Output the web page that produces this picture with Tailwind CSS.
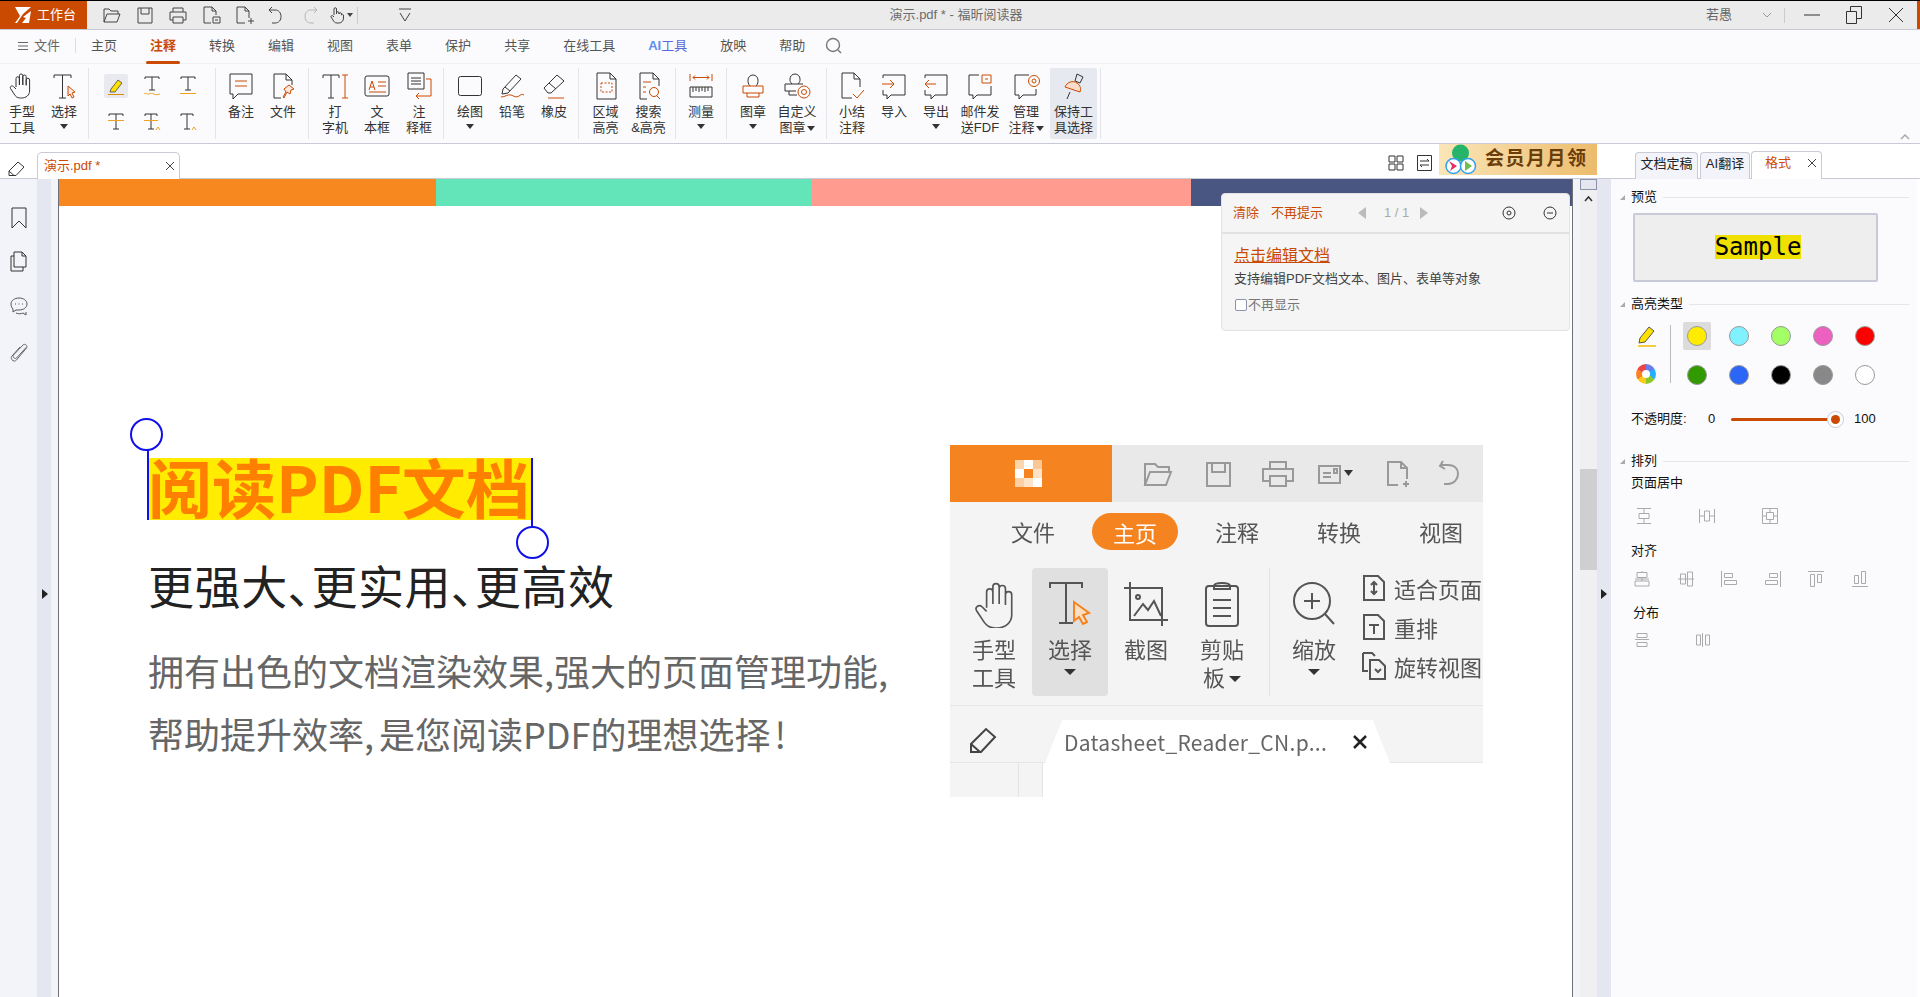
<!DOCTYPE html>
<html lang="zh">
<head>
<meta charset="utf-8">
<title>演示.pdf - 福昕阅读器</title>
<script src="https://cdn.jsdelivr.net/npm/@tailwindcss/browser@4"></script>
</head>
<body class="w-[1920px] h-[997px] overflow-hidden bg-white text-[13px] text-[#333] [font-family:'Liberation_Sans','Noto_Sans_CJK_SC',sans-serif]">

<!-- title bar -->
<header class="h-[30px] border-t border-b border-t-black border-b-[#c8cad8] bg-[#ebebeb] flex items-center relative">
  <div class="w-[87px] h-full bg-[#ca4a02] flex items-center pl-[14px] gap-[5px] text-white text-[13px]">
    <svg width="18" height="18" viewBox="0 0 18 18"><path d="M1 1h16L9 8 3 17l-2 0 5-7z M9 11l8-6-2 12H8l4-5z" fill="#fff"/></svg>
    <span>工作台</span>
  </div>
  <div class="flex items-center pl-[8px]">
    <svg class="w-[33px]" height="20" viewBox="0 0 33 20" fill="none" stroke="#444"><path d="M9 17V4h5l2 2h7v3 M9 17l3-8h13l-3 8z"/></svg>
    <svg class="w-[33px]" height="20" viewBox="0 0 33 20" fill="none" stroke="#444"><path d="M10 3h14v15H10z M13 3v6h8V3"/></svg>
    <svg class="w-[33px]" height="20" viewBox="0 0 33 20" fill="none" stroke="#444"><path d="M12 7V3h10v4 M12 15H9V7h16v8h-3 M12 12h10v6H12z"/></svg>
    <svg class="w-[33px]" height="20" viewBox="0 0 33 20" fill="none" stroke="#444"><path d="M17 18h-7V2h8l4 4v4 M18 2v4h4 M19 12h7v6h-7z M21 15h3"/></svg>
    <svg class="w-[33px]" height="20" viewBox="0 0 33 20" fill="none" stroke="#444"><path d="M18 18h-8V2h8l4 4v7 M18 2v4h4 M24 13v6 M21 16h6"/></svg>
    <svg class="w-[33px]" height="20" viewBox="0 0 33 20" fill="none" stroke="#444"><path d="M12 2L9 5l3 3 M9 5h6c4 0 6 3 6 6.500S19 18 15 18h-3"/></svg>
    <svg class="w-[33px]" height="20" viewBox="0 0 33 20" fill="none" stroke="#b5b5b5"><path d="M21 2l3 3-3 3 M24 5h-6c-4 0-6 3-6 6.500S14 18 18 18h3"/></svg>
    <svg class="w-[33px]" height="20" viewBox="0 0 33 20" fill="none" stroke="#444"><path d="M8 10V4a1.200 1.200 0 0 1 2.500 0v5 M10.500 8a1.200 1.200 0 0 1 2.500 0v1 M13 9a1.200 1.200 0 0 1 2.500 0v1 M15.500 10a1.200 1.200 0 0 1 2 0v3c0 3-2 5-4.500 5H11c-2 0-3-1-4-3l-2-3c-.5-1 1-2 2-1l1 1"/><path d="M21 8h6l-3 4z" fill="#444" stroke="none"/></svg>
    <div class="w-px h-[17px] bg-[#ccc] ml-[-2px]"></div>
    <svg class="ml-[37px]" width="20" height="20" viewBox="0 0 20 20" fill="none" stroke="#444"><path d="M4 4h12 M5 8l5 8 5-8"/></svg>
  </div>
  <div class="absolute left-0 w-[1912px] text-center text-[#6b6b6b] pointer-events-none">演示.pdf * - 福昕阅读器</div>
  <div class="ml-auto flex items-center text-[#666] h-full">
    <span>若愚</span>
    <svg class="ml-[29px]" width="12" height="12" viewBox="0 0 12 12" fill="none" stroke="#999"><path d="M2 4l4 4 4-4"/></svg>
    <div class="w-px h-[15px] bg-[#ccc] ml-[11px]"></div>
    <svg class="ml-[19px]" width="16" height="16" viewBox="0 0 16 16" fill="none" stroke="#333"><path d="M0 8h16"/></svg>
    <svg class="ml-[26px]" width="16" height="18" viewBox="0 0 16 18" fill="none" stroke="#333"><path d="M.5 5.500h10v12H.5z M4.500 5.500V.5h11v12h-5"/></svg>
    <svg class="ml-[26px]" width="16" height="16" viewBox="0 0 16 16" fill="none" stroke="#333"><path d="M1 1l14 14 M15 1L1 15"/></svg>
    <div class="w-[3px] h-full bg-[#ca4a02] ml-[13px]"></div>
  </div>
</header>

<!-- menu row -->
<nav class="h-[34px] pb-[2px] bg-[#fbfbfd] border-b border-[#f0f0f4] flex items-center text-[#555] relative">
  <svg class="ml-[17px]" width="12" height="12" viewBox="0 0 12 12" stroke="#666"><path d="M1 2.500h10 M1 6h10 M1 9.500h10"/></svg>
  <span class="ml-[5px] text-[#666]">文件</span>
  <div class="w-px h-[15px] bg-[#ddd] ml-[15px]"></div>
  <div class="flex items-center gap-[33px] ml-[15px]">
    <span>主页</span>
    <span class="relative font-bold text-[#ca4a02]">注释<span class="absolute left-[-4px] right-[-4px] top-[25px] h-[3px] rounded-full bg-[#ca4a02]"></span></span>
    <span>转换</span><span>编辑</span><span>视图</span><span>表单</span><span>保护</span><span>共享</span><span>在线工具</span>
    <span class="text-[#5a6ad8]"><b class="font-bold text-[#5b8cf0]">AI</b>工具</span>
    <span>放映</span><span>帮助</span>
  </div>
  <svg class="ml-[20px]" width="18" height="18" viewBox="0 0 18 18" fill="none" stroke="#777" stroke-width="1.400"><circle cx="8" cy="8" r="6.500"/><path d="M13 13l3 3"/></svg>
</nav>

<!-- ribbon -->
<section class="h-[80px] bg-[#fbfbfd] border-b border-[#c8cad8] flex items-start relative leading-[16px] text-center text-[#333]">
  <!-- group 1 -->
  <div class="w-[89px] h-[71px] mt-[4px] border-r border-[#e4e4ea] flex pl-px">
    <div class="w-[42px] flex flex-col items-center pt-[4px]">
      <svg width="28" height="28" viewBox="0 0 28 28" fill="none" stroke="#333"><path d="M8 15V6.500a1.700 1.700 0 0 1 3.400 0V13 M11.400 13V3.700a1.700 1.700 0 0 1 3.400 0V13 M14.800 13V4.700a1.700 1.700 0 0 1 3.400 0V13 M18.200 13.500V8a1.700 1.700 0 0 1 3.400 0V19c0 4-3.500 7-8 7h-1c-3.500 0-5-1.500-6.500-4L2.500 16.500c-1-2 1.500-3.500 3-2L8 17"/></svg>
      <span class="mt-[4px]">手型<br>工具</span>
    </div>
    <div class="w-[42px] flex flex-col items-center pt-[4px]">
      <svg width="28" height="28" viewBox="0 0 28 28" fill="none" stroke="#333"><path d="M4 6V3h17v3 M12.500 3v23 M9 26h7"/><path d="M18 14l7 6-3 1 2 4-2 1-2-4-2 2z" stroke="#ca4a02" fill="#fbe9df"/></svg>
      <span class="mt-[4px]">选择</span>
      <span class="w-0 h-0 mt-[4px] border-x-[4px] border-x-transparent border-t-[5px] border-t-[#333]"></span>
    </div>
  </div>
  <!-- group 2 -->
  <div class="w-[127px] h-[71px] mt-[4px] border-r border-[#e4e4ea] pl-[9px] grid grid-cols-[36px_36px_36px] grid-rows-[36px_36px] place-items-center">
    <div class="w-[24px] h-[24px] rounded-[2px] bg-[#e8eaf0] flex items-center justify-center">
      <svg width="20" height="20" viewBox="0 0 20 20"><path d="M5 13l7-9 4 3-7 9-5 0z" fill="#ffe000" stroke="#444" stroke-width=".8"/><path d="M2 18.500h16" stroke="#e08a00"/></svg>
    </div>
    <svg width="20" height="22" viewBox="0 0 20 22" fill="none" stroke="#333"><path d="M3 4V2h14v2 M10 2v13 M7 15h6"/><path d="M2 19c2-2 3 1 5 0s3-1 5 0 3 1 6 0" stroke="#f0a020"/></svg>
    <svg width="20" height="22" viewBox="0 0 20 22" fill="none" stroke="#333"><path d="M3 4V2h14v2 M10 2v13 M7 15h6"/><path d="M2 18.500h16" stroke="#f0a020"/></svg>
    <svg width="20" height="22" viewBox="0 0 20 22" fill="none" stroke="#333"><path d="M3 5V3h14v2 M10 3v15 M7 18h6"/><path d="M2 9.500h16" stroke="#f0a020"/></svg>
    <svg width="20" height="22" viewBox="0 0 20 22" fill="none" stroke="#333"><path d="M3 5V3h12v2 M9 3v15 M6 18h6"/><path d="M2 9.500h14" stroke="#f0a020"/><path d="M14 19l2-3 2 3" stroke="#f0a020"/></svg>
    <svg width="20" height="22" viewBox="0 0 20 22" fill="none" stroke="#333"><path d="M3 5V3h12v2 M9 3v15 M6 18h6"/><path d="M14 19l2-3 2 3" stroke="#f0a020"/></svg>
  </div>
  <!-- group 3 -->
  <div class="w-[93px] h-[71px] mt-[4px] border-r border-[#e4e4ea] flex pl-[4px]">
    <div class="w-[42px] flex flex-col items-center pt-[4px]">
      <svg width="28" height="28" viewBox="0 0 28 28" fill="none" stroke="#333"><path d="M3 2h22v20H11l-5 5v-5H3z"/><path d="M8 9h12 M8 14h12" stroke="#ca4a02"/></svg>
      <span class="mt-[4px]">备注</span>
    </div>
    <div class="w-[42px] flex flex-col items-center pt-[4px]">
      <svg width="28" height="28" viewBox="0 0 28 28" fill="none" stroke="#333"><path d="M12 26H5V2h12l6 6v5 M17 2v6h6"/><path d="M15 17l5-4 5 4-3 1-1 4-3-2-3 6-1-1 3-5-2-3z" stroke="#ca4a02" fill="#fbe9df"/></svg>
      <span class="mt-[4px]">文件</span>
    </div>
  </div>
  <!-- group 4 -->
  <div class="w-[135px] h-[71px] mt-[4px] border-r border-[#e4e4ea] flex pl-[5px]">
    <div class="w-[42px] flex flex-col items-center pt-[4px]">
      <svg width="28" height="28" viewBox="0 0 28 28" fill="none" stroke="#333"><path d="M2 6V3h16v3 M10 3v23 M7 26h6"/><path d="M21 3h6 M24 3v23 M21 26h6" stroke="#ca4a02"/></svg>
      <span class="mt-[4px]">打<br>字机</span>
    </div>
    <div class="w-[42px] flex flex-col items-center pt-[4px]">
      <svg width="28" height="28" viewBox="0 0 28 28" fill="none" stroke="#333"><rect x="2" y="4" width="24" height="20" rx="2"/><path d="M6 18l3-9 3 9 M7 15h4 M15 10h8 M15 14h8 M6 20h17" stroke="#ca4a02"/></svg>
      <span class="mt-[4px]">文<br>本框</span>
    </div>
    <div class="w-[42px] flex flex-col items-center pt-[4px]">
      <svg width="28" height="28" viewBox="0 0 28 28" fill="none" stroke="#333"><path d="M3 1h16v16H3z M6 6h10 M6 9h10 M6 12h10"/><path d="M21 7h5v17H11 M14 21l-3 3 3 3" stroke="#ca4a02"/></svg>
      <span class="mt-[4px]">注<br>释框</span>
    </div>
  </div>
  <!-- group 5 -->
  <div class="w-[135px] h-[71px] mt-[4px] border-r border-[#e4e4ea] flex pl-[5px]">
    <div class="w-[42px] flex flex-col items-center pt-[4px]">
      <svg width="28" height="28" viewBox="0 0 28 28" fill="none" stroke="#333"><rect x="2.500" y="4.500" width="23" height="19" rx="2"/></svg>
      <span class="mt-[4px]">绘图</span>
      <span class="w-0 h-0 mt-[4px] border-x-[4px] border-x-transparent border-t-[5px] border-t-[#333]"></span>
    </div>
    <div class="w-[42px] flex flex-col items-center pt-[4px]">
      <svg width="28" height="28" viewBox="0 0 28 28" fill="none" stroke="#333"><path d="M5 17L18 3l5 4-13 14-6 1z M7 15l5 4"/><path d="M3 25c4 0 7-3 10-2s5 3 8 1 3-2 5-1" stroke="#ca4a02"/></svg>
      <span class="mt-[4px]">铅笔</span>
    </div>
    <div class="w-[42px] flex flex-col items-center pt-[4px]">
      <svg width="28" height="28" viewBox="0 0 28 28" fill="none" stroke="#333"><path d="M4 16L17 3l7 6-13 12H8z M9 11l7 6"/><path d="M8 26h16" stroke="#ca4a02"/></svg>
      <span class="mt-[4px]">橡皮</span>
    </div>
  </div>
  <!-- group 6 -->
  <div class="w-[97px] h-[71px] mt-[4px] border-r border-[#e4e4ea] flex pl-[5px]">
    <div class="w-[43px] flex flex-col items-center pt-[4px]">
      <svg width="28" height="28" viewBox="0 0 28 28" fill="none" stroke="#333"><path d="M5 27V1h13l6 6v20z M18 1v6h6"/><path d="M9 11h11v9H9z" stroke="#ca4a02" stroke-dasharray="2 1.500"/></svg>
      <span class="mt-[4px]">区域<br>高亮</span>
    </div>
    <div class="w-[43px] flex flex-col items-center pt-[4px]">
      <svg width="28" height="28" viewBox="0 0 28 28" fill="none" stroke="#333"><path d="M12 27H5V1h13l6 6v7 M18 1v6h6"/><path d="M8 10h8 M8 15h3 M8 20h3" stroke="#ca4a02"/><circle cx="19" cy="20" r="4.500" stroke="#ca4a02"/><path d="M22 24l3 3" stroke="#ca4a02"/></svg>
      <span class="mt-[4px] whitespace-nowrap">搜索<br>&amp;高亮</span>
    </div>
  </div>
  <!-- group 7 -->
  <div class="w-[51px] h-[71px] mt-[4px] border-r border-[#e4e4ea] flex justify-center">
    <div class="w-[42px] flex flex-col items-center pt-[4px]">
      <svg width="28" height="28" viewBox="0 0 28 28" fill="none" stroke="#333"><path d="M3 15h22v10H3z M6 15v5 M9 15v4 M12 15v5 M15 15v4 M18 15v5 M21 15v4"/><path d="M3 2v7 M25 2v7 M6 5.500h16 M8 3.500l-2 2 2 2 M20 3.500l2 2-2 2" stroke="#ca4a02"/></svg>
      <span class="mt-[4px]">测量</span>
      <span class="w-0 h-0 mt-[4px] border-x-[4px] border-x-transparent border-t-[5px] border-t-[#333]"></span>
    </div>
  </div>
  <!-- group 8 -->
  <div class="w-[100px] h-[71px] mt-[4px] border-r border-[#e4e4ea] flex pl-[4px]">
    <div class="w-[44px] flex flex-col items-center pt-[4px]">
      <svg width="28" height="28" viewBox="0 0 28 28" fill="none" stroke="#333"><path d="M11 14c-2-2-2-4-2-6a5 5 0 0 1 10 0c0 2 0 4-2 6"/><path d="M4 14h20v7H4z M8 21v4h12v-4" stroke="#ca4a02"/></svg>
      <span class="mt-[4px]">图章</span>
      <span class="w-0 h-0 mt-[4px] border-x-[4px] border-x-transparent border-t-[5px] border-t-[#333]"></span>
    </div>
    <div class="w-[44px] flex flex-col items-center pt-[4px]">
      <svg width="28" height="28" viewBox="0 0 28 28" fill="none" stroke="#333"><path d="M9 12c-2-2-2-3-2-5a5 5 0 0 1 10 0c0 2 0 3-2 5 M2 12h18 M2 12v7h11 M6 19v4h8"/><circle cx="21" cy="20" r="6" stroke="#ca4a02"/><circle cx="21" cy="20" r="2.500" stroke="#ca4a02"/></svg>
      <span class="mt-[4px] whitespace-nowrap">自定义<br>图章<span class="inline-block w-0 h-0 ml-[1px] mb-[1px] border-x-[4px] border-x-transparent border-t-[5px] border-t-[#333]"></span></span>
    </div>
  </div>
  <!-- group 9 -->
  <div class="w-[274px] h-[71px] mt-[4px] border-r border-[#e4e4ea] flex pl-[4px]">
    <div class="w-[42px] flex flex-col items-center pt-[4px]">
      <svg width="28" height="28" viewBox="0 0 28 28" fill="none" stroke="#333"><path d="M14 26H4V1h12l6 6v8 M16 1v6h6"/><path d="M15 22l4 4 7-8" stroke="#ca4a02"/></svg>
      <span class="mt-[4px]">小结<br>注释</span>
    </div>
    <div class="w-[42px] flex flex-col items-center pt-[4px]">
      <svg width="28" height="28" viewBox="0 0 28 28" fill="none" stroke="#333"><path d="M3 6V3h22v20H11l-4 4v-4H3v-5"/><path d="M2 12h11 M10 8l4 4-4 4" stroke="#ca4a02"/></svg>
      <span class="mt-[4px]">导入</span>
    </div>
    <div class="w-[42px] flex flex-col items-center pt-[4px]">
      <svg width="28" height="28" viewBox="0 0 28 28" fill="none" stroke="#333"><path d="M3 6V3h22v20H13l-4 4v-4H3v-5"/><path d="M14 12H3 M7 8l-4 4 4 4" stroke="#ca4a02"/></svg>
      <span class="mt-[4px]">导出</span>
      <span class="w-0 h-0 mt-[4px] border-x-[4px] border-x-transparent border-t-[5px] border-t-[#333]"></span>
    </div>
    <div class="w-[46px] flex flex-col items-center pt-[4px]">
      <svg width="28" height="28" viewBox="0 0 28 28" fill="none" stroke="#333"><path d="M13 3H3v20h4v4l4-4h14V14"/><path d="M16 3h9v8h-9z M19 7h3" stroke="#ca4a02"/></svg>
      <span class="mt-[4px] whitespace-nowrap">邮件发<br>送FDF</span>
    </div>
    <div class="w-[46px] flex flex-col items-center pt-[4px]">
      <svg width="28" height="28" viewBox="0 0 28 28" fill="none" stroke="#333"><path d="M17 3H3v20h4v4l4-4h13v-6"/><circle cx="22" cy="9" r="5.500" stroke="#ca4a02"/><circle cx="22" cy="9" r="2" stroke="#ca4a02"/></svg>
      <span class="mt-[4px] whitespace-nowrap">管理<br>注释<span class="inline-block w-0 h-0 ml-[1px] mb-[1px] border-x-[4px] border-x-transparent border-t-[5px] border-t-[#333]"></span></span>
    </div>
    <div class="w-[47px] flex flex-col items-center pt-[4px] bg-[#e7e9f0] rounded-[2px] ml-[1px]">
      <svg width="28" height="28" viewBox="0 0 28 28" fill="none" stroke="#333"><path d="M17 2l6 3-3 6-5-2z"/><path d="M5 15c2-5 8-7 12-4s4 6 3 9z" stroke="#ca4a02" fill="#fbdcc8"/><path d="M10 20l-3 7"/></svg>
      <span class="mt-[4px] whitespace-nowrap">保持工<br>具选择</span>
    </div>
  </div>
  <svg class="absolute right-[10px] bottom-[3px]" width="10" height="8" viewBox="0 0 10 8" fill="none" stroke="#aaa" stroke-width="1.500"><path d="M1 7l4-4 4 4"/></svg>
</section>

<!-- tab row -->
<div class="h-[35px] bg-white border-b border-[#c8cad8] flex items-end relative">
  <svg class="absolute left-[8px] top-[16px]" width="17" height="17" viewBox="0 0 17 17" fill="none" stroke="#333"><path d="M1 11L10 2l6 5-8 8.500H1z M1 11l5 4.500"/></svg>
  <div class="ml-[37px] w-[143px] h-[27px] mb-[-1px] bg-white border border-b-0 border-[#c8cad8] rounded-t-[5px] flex items-center pl-[6px] text-[#ca4a02]">
    <span>演示.pdf *</span>
    <svg class="ml-auto mr-[4px]" width="10" height="10" viewBox="0 0 10 10" stroke="#444"><path d="M1 1l8 8 M9 1L1 9"/></svg>
  </div>
  <div class="ml-auto flex items-end h-full">
    <svg class="mb-[7px]" width="16" height="16" viewBox="0 0 16 16" fill="none" stroke="#333"><path d="M1 1h6v6H1z M9 1h6v6H9z M1 9h6v6H1z M9 9h6v6H9z"/></svg>
    <svg class="mb-[7px] ml-[13px]" width="15" height="16" viewBox="0 0 15 16" fill="none" stroke="#333"><path d="M.5.5h14v15H.5z M3 6h9l-2-2 M12 10H3l2 2"/></svg>
    <div class="ml-[7px] w-[158px] h-[31px] mb-[3px] bg-gradient-to-r from-[#fbe6b8] to-[#ecbc6c] flex items-center relative">
      <svg class="ml-[6px]" width="32" height="31" viewBox="0 0 32 31"><circle cx="15.500" cy="9" r="8.500" fill="#26b36a"/><circle cx="8.500" cy="22" r="7.500" fill="#fff" stroke="#2da3ef" stroke-width="1.500"/><circle cx="23" cy="22" r="7.500" fill="#fff" stroke="#2da3ef" stroke-width="1.500"/><path d="M4 17l8 5-7 5 2-5z" fill="#e8305f"/><path d="M20 17l7 5-7 5z" fill="#6fc04a"/></svg>
      <span class="ml-[8px] text-[19px] font-bold tracking-[1.500px] text-[#6b3d0a] whitespace-nowrap">会员月月领</span>
    </div>
    <div class="w-[38px]"></div>
    <div class="w-[63px] h-[27px] mb-[-1px] pb-[5px] bg-[#f3f4f9] border border-b-0 border-[#c8cad8] rounded-t-[4px] flex items-center justify-center text-[#222]">文档定稿</div>
    <div class="w-[50px] h-[27px] mb-[-1px] pb-[5px] ml-[2px] bg-[#f3f4f9] border border-b-0 border-[#c8cad8] rounded-t-[4px] flex items-center justify-center text-[#222]">AI翻译</div>
    <div class="w-[71px] h-[28px] mb-[-1px] pb-[5px] ml-[1px] bg-white border border-b-0 border-[#c8cad8] rounded-t-[4px] flex items-center pl-[13px] text-[#ca4a02] relative z-10">格式
      <svg class="ml-auto mr-[4px]" width="10" height="10" viewBox="0 0 10 10" stroke="#444"><path d="M1 1l8 8 M9 1L1 9"/></svg>
    </div>
    <div class="w-[98px]"></div>
  </div>
</div>

<!-- main -->
<main class="h-[818px] flex relative overflow-hidden">
  <!-- left rail -->
  <aside class="w-[37px] bg-[#f3f4f9] flex flex-col items-center pt-[28px]">
    <svg width="16" height="22" viewBox="0 0 16 22" fill="none" stroke="#333"><path d="M1 1h14v20l-7-7-7 7z"/></svg>
    <svg class="mt-[22px]" width="17" height="21" viewBox="0 0 17 21" fill="none" stroke="#333"><path d="M4 16V1h8l4 4v11z M12 1v4h4 M4 5H1v15h12v-4"/></svg>
    <svg class="mt-[25px]" width="18" height="19" viewBox="0 0 18 19" fill="none" stroke="#555"><path d="M9 1c4.500 0 8 2.500 8 6s-3.500 6-8 6c-1 0-2 0-3 0l-3 2v-3C2 11 1 9 1 7c0-3.500 3.500-6 8-6z M5 7h1 M8.500 7h1 M12 7h1"/><path d="M6 16c2 1 5 1 7 0l3 2v-3"/></svg>
    <svg class="mt-[27px]" width="18" height="20" viewBox="0 0 18 20" fill="none" stroke="#666"><path d="M16 4.500L6.500 15c-1.500 1.500-4.500-1-3-3L13 2c2-2 5 1 3.500 3L6.500 17c-2.500 3-7-1-4.500-4L10 4"/></svg>
  </aside>
  <div class="w-[14px] bg-[#e4e7f0] relative">
    <span class="absolute left-[5px] top-[410px] w-0 h-0 border-y-[5px] border-y-transparent border-l-[6px] border-l-[#222]"></span>
  </div>
  <div class="w-[7px] bg-[#f3f4f8]"></div>

  <!-- page -->
  <div class="w-[1515px] bg-white border-x border-[#6f7078]">
    <div class="flex h-[27px]">
      <div class="w-[377px] bg-[#f7881f]"></div>
      <div class="w-[376px] bg-[#63e4b9]"></div>
      <div class="w-[379px] bg-[#ff9c8f]"></div>
      <div class="flex-1 bg-[#495682]"></div>
    </div>
    <div class="flex [font-family:'Noto_Sans_CJK_SC',sans-serif]">
      <!-- text column -->
      <div class="w-[891px] shrink-0 pl-[89px] pt-[252px]">
        <div class="relative w-[384px] h-[62px] bg-[#ffec00] text-[#ff8000] text-[64px] font-bold leading-[55px] whitespace-nowrap">阅读PDF文档
          <span class="absolute left-[-18px] top-[-40px] w-[33px] h-[33px] rounded-full border-2 border-[#1010e8]"></span>
          <span class="absolute left-[-1px] top-[-8px] bottom-0 w-[2px] bg-[#1010e8]"></span>
          <span class="absolute right-[-1px] top-0 bottom-[-6px] w-[2px] bg-[#1010e8]"></span>
          <span class="absolute right-[-17px] top-[68px] w-[33px] h-[33px] rounded-full border-2 border-[#1010e8]"></span>
        </div>
        <div class="mt-[34px] w-fit text-[46px] leading-[60px] text-[#222] whitespace-nowrap [font-feature-settings:'palt'] tracking-[.6px]">更强大、更实用、更高效</div>
        <div class="mt-[25px] w-fit text-[36px] leading-[63px] text-[#666] whitespace-nowrap">拥有出色的文档渲染效果,强大的页面管理功能,<br>帮助提升效率<span class="mr-[5px]">,</span>是您阅读PDF的理想选择<span class="ml-[4px]">!</span></div>
      </div>
      <!-- embedded screenshot -->
      <div class="w-[533px] h-[352px] mt-[239px] flex flex-col bg-[#f4f4f4] text-[22px] text-[#555] leading-[28px] overflow-hidden blur-[.4px]">
        <div class="h-[57px] flex shrink-0 bg-[#e9e9e9] overflow-hidden">
          <div class="w-[162px] shrink-0 bg-[#f58320] flex items-center justify-center pr-[6px]">
            <div class="grid grid-cols-3 w-[27px] h-[27px]">
              <i class="bg-[#fcd5ac]"></i><i class="bg-[#fff]"></i><i class="bg-[#fbc795]"></i>
              <i class="bg-[#fff]"></i><i class="bg-[#f58320]"></i><i class="bg-[#fde3c8]"></i>
              <i class="bg-[#fcd0a4]"></i><i class="bg-[#fde3c8]"></i><i class="bg-[#fff]"></i>
            </div>
          </div>
          <div class="flex items-center pl-[16px]">
            <svg class="w-[60px]" height="30" viewBox="0 0 60 30" fill="none" stroke="#999" stroke-width="2"><path d="M17 26V5h10l3 3h11v5 M17 26l5-13h21l-5 13z"/></svg>
            <svg class="w-[60px]" height="30" viewBox="0 0 60 30" fill="none" stroke="#999" stroke-width="2"><path d="M19 4h23v23H19z M24 4v9h13V4"/></svg>
            <svg class="w-[60px]" height="30" viewBox="0 0 60 30" fill="none" stroke="#999" stroke-width="2"><path d="M22 10V3h16v7 M22 22h-7V10h30v12h-7 M22 17h16v10H22z"/></svg>
            <svg class="w-[60px]" height="30" viewBox="0 0 60 30" fill="none" stroke="#999" stroke-width="2"><path d="M11 7h21v17H11z M15 14h8 M15 18h8 M26 10h3v4h-3z"/><path d="M36 11h9l-4.500 6z" fill="#333" stroke="none"/></svg>
            <svg class="w-[60px]" height="30" viewBox="0 0 60 30" fill="none" stroke="#999" stroke-width="2"><path d="M30 26H20V3h13l6 6v11 M33 3v6h6 M38 22v6 M35 25h6"/></svg>
            <svg class="w-[50px]" height="30" viewBox="0 0 50 30" fill="none" stroke="#999" stroke-width="2"><path d="M15 2l-3 5 5 3 M12 6h8c7 0 10 4 10 9s-4 10-10 10h-4"/></svg>
          </div>
        </div>
        <div class="h-[66px] flex items-center shrink-0 pl-[32px] pb-[7px]">
          <span class="w-[102px] shrink-0 text-center pb-[2px]">文件</span>
          <span class="w-[86px] shrink-0 h-[37px] mx-[8px] rounded-full bg-[#f58320] text-white flex items-center justify-center">主页</span>
          <span class="w-[102px] shrink-0 text-center pb-[2px]">注释</span>
          <span class="w-[102px] shrink-0 text-center pb-[2px]">转换</span>
          <span class="w-[102px] shrink-0 text-center pb-[2px]">视图</span>
        </div>
        <div class="h-[128px] flex shrink-0 pl-[6px] text-center">
          <div class="w-[76px] shrink-0 flex flex-col items-center pt-[12px]">
            <svg width="46" height="48" viewBox="0 0 24 26" fill="none" stroke="#555" stroke-width=".9"><path d="M8 15V6.500a1.700 1.700 0 0 1 3.400 0V13 M11.400 13V3.700a1.700 1.700 0 0 1 3.400 0V13 M14.800 13V4.700a1.700 1.700 0 0 1 3.400 0V13 M18.200 13.500V8a1.700 1.700 0 0 1 3.400 0V19c0 4-3.500 7-8 7h-1c-3.500 0-5-1.500-6.500-4L2.500 16.500c-1-2 1.500-3.500 3-2L8 17"/></svg>
            <span class="mt-[6px]">手型<br>工具</span>
          </div>
          <div class="w-[76px] shrink-0 flex flex-col items-center pt-[12px] bg-[#e0e0e0] rounded-[4px]">
            <svg width="46" height="48" viewBox="0 0 46 48" fill="none" stroke="#555" stroke-width="2"><path d="M3 8V3h32v5 M19 3v40 M12 43h14"/><path d="M27 22l15 11-6 2 4 7-4 2-4-7-5 4z" stroke="#f58320" fill="#fde0c4"/></svg>
            <span class="mt-[6px]">选择</span>
            <span class="w-0 h-0 mt-[7px] border-x-[6px] border-x-transparent border-t-[6px] border-t-[#333]"></span>
          </div>
          <div class="w-[76px] shrink-0 flex flex-col items-center pt-[12px]">
            <svg width="48" height="48" viewBox="0 0 48 48" fill="none" stroke="#555" stroke-width="2"><path d="M8 2v38h38 M2 8h38v38"/><circle cx="16" cy="17" r="2"/><path d="M12 36l9-12 5 6 6-9 7 15"/></svg>
            <span class="mt-[6px]">截图</span>
          </div>
          <div class="w-[76px] shrink-0 flex flex-col items-center pt-[12px]">
            <svg width="40" height="48" viewBox="0 0 40 48" fill="none" stroke="#555" stroke-width="2"><rect x="4" y="6" width="32" height="40" rx="3"/><path d="M12 6c0-4 16-4 16 0v3H12z M11 20h18 M11 28h18 M11 36h18"/></svg>
            <span class="mt-[6px]">剪贴<br>板<span class="inline-block w-0 h-0 ml-[4px] mb-[4px] border-x-[6px] border-x-transparent border-t-[6px] border-t-[#333]"></span></span>
          </div>
          <div class="w-px shrink-0 h-[128px] bg-[#e4e4e4] ml-[9px]"></div>
          <div class="w-[76px] shrink-0 ml-[6px] flex flex-col items-center pt-[12px]">
            <svg width="46" height="48" viewBox="0 0 46 48" fill="none" stroke="#555" stroke-width="2"><circle cx="21" cy="21" r="18"/><path d="M21 13v16 M13 21h16 M34 34l9 10"/></svg>
            <span class="mt-[6px]">缩放</span>
            <span class="w-0 h-0 mt-[7px] border-x-[6px] border-x-transparent border-t-[6px] border-t-[#333]"></span>
          </div>
          <div class="flex flex-col pl-[10px] pt-[6px] gap-[11px] whitespace-nowrap">
            <div class="flex items-center gap-[8px] h-[28px]"><svg width="24" height="28" viewBox="0 0 24 28" fill="none" stroke="#555" stroke-width="2"><path d="M2 2h14l6 6v18H2z M12 8v12 M9 11l3-3 3 3 M9 17l3 3 3-3"/></svg>适合页面</div>
            <div class="flex items-center gap-[8px] h-[28px]"><svg width="24" height="28" viewBox="0 0 24 28" fill="none" stroke="#555" stroke-width="2"><path d="M2 2h14l6 6v18H2z M7 12h10 M12 12v9"/></svg>重排</div>
            <div class="flex items-center gap-[8px] h-[28px]"><svg width="24" height="28" viewBox="0 0 24 28" fill="none" stroke="#555" stroke-width="2"><path d="M1 1h9l3 3 M1 1v18h5 M8 8h9l6 6v13H8z M13 17l3 3 3-3"/></svg>旋转视图</div>
          </div>
        </div>
        <div class="h-[10px] shrink-0 border-b border-[#e6e6e6]"></div>
        <div class="h-[57px] shrink-0 border-b border-[#e6e6e6] flex items-end relative">
          <svg class="absolute left-[19px] top-[20px]" width="28" height="28" viewBox="0 0 28 28" fill="none" stroke="#444" stroke-width="2"><path d="M2 18L17 3l9 8-14 15H2z M2 18l9 8"/></svg>
          <div class="ml-[95px] w-[345px] h-[43px] mb-[-1px] bg-white [clip-path:polygon(5%_0,95%_0,100%_100%,0_100%)] flex items-center pl-[19px] text-[21px] tracking-[.3px] text-[#666] whitespace-nowrap">Datasheet_Reader_CN.p...
            <svg class="ml-[26px]" width="14" height="14" viewBox="0 0 14 14" stroke="#222" stroke-width="2.500"><path d="M1 1l12 12 M13 1L1 13"/></svg>
          </div>
        </div>
        <div class="flex-1 flex">
          <div class="w-[69px] bg-[#f4f4f4] border-r border-[#e4e4e4]"></div>
          <div class="w-[24px] bg-[#f4f4f4] border-r border-[#e4e4e4]"></div>
          <div class="flex-1 bg-white"></div>
        </div>
      </div>
    </div>
  </div>

  <!-- scrollbar -->
  <div class="w-[7px] bg-[#f3f4f8]"></div>
  <div class="w-[17px] bg-[#f0f0f2] flex flex-col items-center">
    <div class="w-[17px] h-[11px] bg-[#e4e7f0] border border-[#8c93aa]"></div>
    <svg class="mt-[5px]" width="9" height="7" viewBox="0 0 9 7" fill="none" stroke="#333" stroke-width="1.500"><path d="M1 6l3.500-4L8 6"/></svg>
    <div class="w-[17px] h-[101px] mt-[267px] bg-[#cfcfd1]"></div>
  </div>
  <div class="w-[14px] bg-[#e4e7f0] relative">
    <span class="absolute left-[4px] top-[410px] w-0 h-0 border-y-[5px] border-y-transparent border-l-[6px] border-l-[#222]"></span>
  </div>

  <!-- right panel -->
  <aside class="w-[306px] bg-[#fbfbfd] text-[#111] pl-[9px] pr-[8px] pt-[10px]">
    <div class="flex items-center h-[16px] gap-[6px]">
      <span class="w-0 h-0 border-b-[5px] border-l-[5px] border-b-[#aaa] border-l-transparent"></span><span>预览</span><span class="flex-1 h-px bg-[#e6e6ea]"></span>
    </div>
    <div class="ml-[13px] w-[245px] h-[69px] mt-[8px] bg-[#eeeeee] border-2 border-[#c8cad8] rounded-[2px] flex items-center justify-center pb-[2px] pl-[5px]">
      <span class="bg-[#f0e000] text-[24px] leading-[24px] text-black [font-family:'DejaVu_Sans_Mono',monospace]">Sample</span>
    </div>
    <div class="flex items-center h-[16px] gap-[6px] mt-[14px]">
      <span class="w-0 h-0 border-b-[5px] border-l-[5px] border-b-[#aaa] border-l-transparent"></span><span>高亮类型</span><span class="flex-1 h-px bg-[#e6e6ea]"></span>
    </div>
    <div class="flex mt-[10px] h-[70px]">
      <div class="w-[50px] pl-[14px] flex flex-col pt-[2px] gap-[14px]">
        <svg width="24" height="24" viewBox="0 0 24 24"><path d="M6 14L15 3l5 4-9 11-6 1z" fill="#ffe000" stroke="#555"/><path d="M4 22h18" stroke="#f0c000" stroke-width="1.500"/></svg>
        <div class="w-[20px] h-[20px] mt-[2px] ml-[2px] rounded-full [background:conic-gradient(#6a7de8_0_16%,#22b0ff_16%_33%,#8ac926_33%_50%,#ffc820_50%_66%,#ff8020_66%_83%,#ee4444_83%_100%)] flex items-center justify-center"><span class="w-[8px] h-[8px] rounded-full bg-white"></span></div>
      </div>
      <div class="w-px h-[58px] bg-[#bbb] mt-[3px]"></div>
      <div class="grid grid-cols-[42px_42px_42px_42px_42px] grid-rows-[28px_28px] gap-y-[11px] ml-[5px] place-items-center">
        <div class="w-[28px] h-[28px] bg-[#dcdcdc] rounded-[2px] flex items-center justify-center"><span class="w-[20px] h-[20px] rounded-full bg-[#ffec00] border border-[#999]"></span></div>
        <span class="w-[20px] h-[20px] rounded-full bg-[#80f2ff] border border-[#999]"></span>
        <span class="w-[20px] h-[20px] rounded-full bg-[#a2ff66] border border-[#999]"></span>
        <span class="w-[20px] h-[20px] rounded-full bg-[#ec60c0] border border-[#999]"></span>
        <span class="w-[20px] h-[20px] rounded-full bg-[#ff0000] border border-[#999]"></span>
        <span class="w-[20px] h-[20px] rounded-full bg-[#339900] border border-[#999]"></span>
        <span class="w-[20px] h-[20px] rounded-full bg-[#2b66f6] border border-[#999]"></span>
        <span class="w-[20px] h-[20px] rounded-full bg-black border border-[#999]"></span>
        <span class="w-[20px] h-[20px] rounded-full bg-[#888] border border-[#999]"></span>
        <span class="w-[20px] h-[20px] rounded-full bg-white border border-[#999]"></span>
      </div>
    </div>
    <div class="flex items-center h-[16px] mt-[19px] pl-[11px]">
      <span class="w-[77px]">不透明度:</span>
      <span class="w-[23px]">0</span>
      <div class="w-[105px] h-[3px] bg-[#ca4a02] relative rounded-full">
        <span class="absolute right-[-8px] top-[-7px] w-[17px] h-[17px] rounded-full bg-white border border-[#c8cad8] flex items-center justify-center"><span class="w-[9px] h-[9px] rounded-full bg-[#ca4a02]"></span></span>
      </div>
      <span class="ml-[18px]">100</span>
    </div>
    <div class="flex items-center h-[16px] gap-[6px] mt-[26px]">
      <span class="w-0 h-0 border-b-[5px] border-l-[5px] border-b-[#aaa] border-l-transparent"></span><span>排列</span><span class="flex-1 h-px bg-[#e6e6ea]"></span>
    </div>
    <div class="pl-[11px] mt-[6px] leading-[16px]">页面居中</div>
    <div class="flex pl-[16px] mt-[17px] gap-[47px] h-[16px]">
      <svg width="16" height="16" viewBox="0 0 16 16" fill="none" stroke="#aaa"><path d="M1 .5h14 M1 15.500h14 M3 5.500h10v5H3z M8 1v4 M8 11v4"/></svg>
      <svg width="16" height="16" viewBox="0 0 16 16" fill="none" stroke="#aaa"><path d="M.5 1v14 M15.500 1v14 M5.500 3v10h5V3z M1 8h4 M11 8h4"/></svg>
      <svg width="16" height="16" viewBox="0 0 16 16" fill="none" stroke="#aaa"><path d="M.5.5h15v15H.5z M4.500 4.500h7v7h-7z M8 1v3 M8 12v3 M1 8h3 M12 8h3"/></svg>
    </div>
    <div class="pl-[11px] mt-[19px] leading-[16px]">对齐</div>
    <div class="flex pl-[14px] mt-[12px] gap-[27.500px] h-[16px]">
      <svg width="16" height="16" viewBox="0 0 16 16" fill="none" stroke="#aaa"><path d="M3 1.500h10v5H3z M1 10h14v5H1z M8 0v1 M8 6.500V10 M1 8h14"/></svg>
      <svg width="16" height="16" viewBox="0 0 16 16" fill="none" stroke="#aaa"><path d="M2.500 3h5v10h-5z M9.500 1h5v14h-5z M0 8h16"/></svg>
      <svg width="16" height="16" viewBox="0 0 16 16" fill="none" stroke="#aaa"><path d="M.5 0v16 M3.500 2.500h8v4h-8z M3.500 9.500h12v4h-12z"/></svg>
      <svg width="16" height="16" viewBox="0 0 16 16" fill="none" stroke="#aaa"><path d="M15.500 0v16 M4.500 2.500h8v4h-8z M.5 9.500h12v4H.5z"/></svg>
      <svg width="16" height="16" viewBox="0 0 16 16" fill="none" stroke="#aaa"><path d="M0 .5h16 M2.500 3.500h4v12h-4z M9.500 3.500h4v8h-4z"/></svg>
      <svg width="16" height="16" viewBox="0 0 16 16" fill="none" stroke="#aaa"><path d="M0 15.500h16 M2.500 4.500h4v8h-4z M9.500.5h4v12h-4z"/></svg>
    </div>
    <div class="pl-[13px] mt-[18px] leading-[16px]">分布</div>
    <div class="flex pl-[14px] mt-[11px] gap-[45px] h-[16px]">
      <svg width="16" height="16" viewBox="0 0 16 16" fill="none" stroke="#aaa"><path d="M3 1.500h10v4H3z M1 7.500h14 M3 10.500h10v4H3z"/></svg>
      <svg width="16" height="16" viewBox="0 0 16 16" fill="none" stroke="#aaa"><path d="M1.500 3h4v10h-4z M7.500 1v14 M10.500 3h4v10h-4z"/></svg>
    </div>
  </aside>
  <div class="w-[3px] bg-white"></div>

  <!-- tip popup -->
  <div class="absolute left-[1221px] top-[14px] w-[349px] h-[138px] bg-[#f5f5f5] border border-[#e2e2e4] rounded-[4px]">
    <div class="h-[40px] border-b-2 border-[#e2e2e4] flex items-center pl-[11px] text-[#ca4a02]">
      <span>清除</span><span class="ml-[12px]">不再提示</span>
      <span class="ml-[35px] w-0 h-0 border-y-[6px] border-y-transparent border-r-[8px] border-r-[#bbb]"></span>
      <span class="ml-[18px] text-[#aaa] whitespace-nowrap">1 / 1</span>
      <span class="ml-[11px] w-0 h-0 border-y-[6px] border-y-transparent border-l-[8px] border-l-[#bbb]"></span>
      <svg class="ml-[74px]" width="14" height="14" viewBox="0 0 14 14" fill="none" stroke="#333"><circle cx="7" cy="7" r="6"/><circle cx="7" cy="7" r="2"/></svg>
      <svg class="ml-[27px]" width="14" height="14" viewBox="0 0 14 14" fill="none" stroke="#333"><circle cx="7" cy="7" r="6"/><path d="M4 7h6"/></svg>
    </div>
    <div class="pl-[12px]">
      <div class="mt-[12px] text-[16px] leading-[20px] text-[#ca4a02] underline">点击编辑文档</div>
      <div class="mt-[4px] leading-[18px] text-[#444]">支持编辑PDF文档文本、图片、表单等对象</div>
      <div class="mt-[8px] flex items-center text-[#777] leading-[18px]"><span class="w-[12px] h-[12px] ml-px mr-[1px] bg-white border border-[#8c93aa] rounded-[2px]"></span>不再显示</div>
    </div>
  </div>
</main>
</body>
</html>
